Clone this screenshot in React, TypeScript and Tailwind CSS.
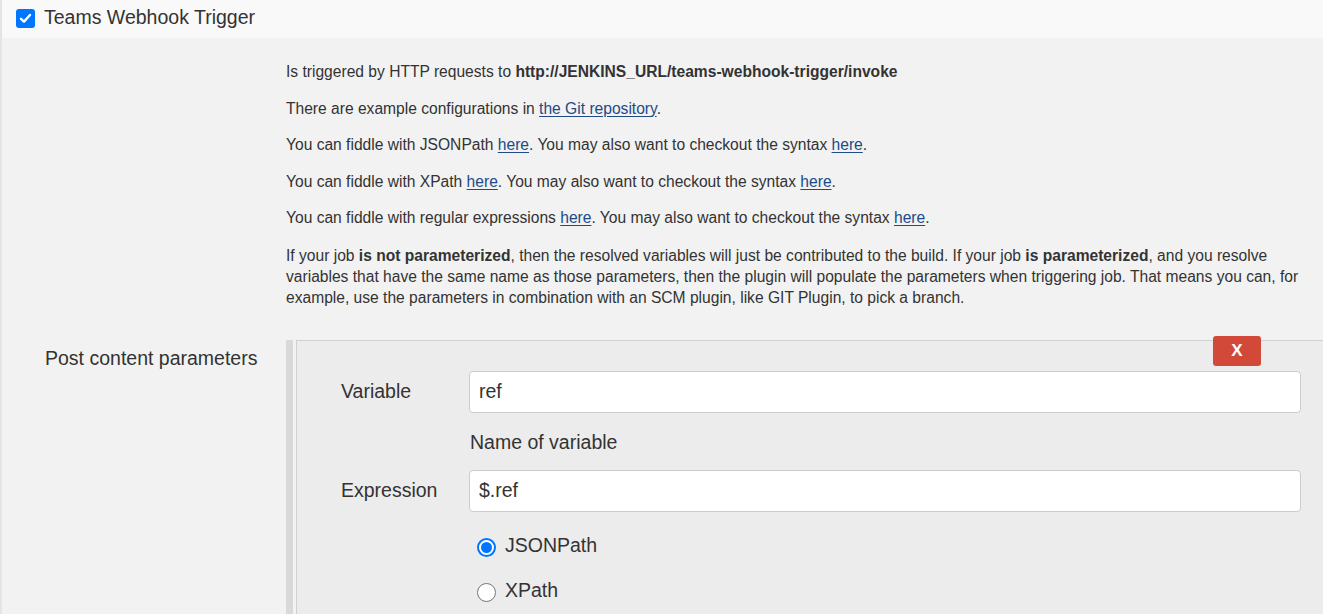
import React from 'react'

const font = { fontFamily: '"Liberation Sans", Arial, sans-serif' }

// ── Small bits ───────────────────────────────────────────────────────────────
function Link({ children }: { children: React.ReactNode }) {
  return <a className="text-[#204a87] underline decoration-1 underline-offset-2">{children}</a>
}

function Checkbox() {
  return (
    <span className="flex h-[19px] w-[19px] items-center justify-center rounded-[3px] bg-[#0075ff]">
      <svg width="13" height="13" viewBox="0 0 13 13" fill="none">
        <path d="M2 6.8 L5 9.6 L11 3" stroke="white" strokeWidth="2.4" strokeLinecap="round" strokeLinejoin="round" />
      </svg>
    </span>
  )
}

function Radio({ checked }: { checked?: boolean }) {
  return checked ? (
    <span className="flex h-[19px] w-[19px] items-center justify-center rounded-full border-2 border-[#0075ff] bg-white">
      <span className="h-[11px] w-[11px] rounded-full bg-[#0075ff]" />
    </span>
  ) : (
    <span className="h-[19px] w-[19px] rounded-full border border-[#767676] bg-white" />
  )
}

function TextBox({ value }: { value: string }) {
  return (
    <div className="flex h-[42px] items-center rounded-[4px] border border-[#cccccc] bg-white px-[9px] text-[19.5px] text-[#333]">
      {value}
    </div>
  )
}

// ── Page ─────────────────────────────────────────────────────────────────────
export default function App() {
  return (
    <div className="min-h-screen bg-white" style={font}>
      <div className="min-h-screen w-[1323px] border-l-2 border-[#e4e4e4] bg-[#f2f2f2] text-[#333]">
        {/* Header row */}
        <div className="flex h-[38px] items-center gap-[9px] bg-[#f9f9f9] pl-[14px] pb-[2px]">
          <Checkbox />
          <span className="text-[19.5px] text-[#333]">Teams Webhook Trigger</span>
        </div>

        {/* Help text */}
        <div className="w-[1310px] pl-[284px] pt-[23px] text-[15.6px] leading-[21px] text-[#333]">
          <p className="mb-[15.5px]">
            Is triggered by HTTP requests to <b>http://JENKINS_URL/teams-webhook-trigger/invoke</b>
          </p>
          <p className="mb-[15.5px]">
            There are example configurations in <Link>the Git repository</Link>.
          </p>
          <p className="mb-[15.5px]">
            You can fiddle with JSONPath <Link>here</Link>. You may also want to checkout the syntax <Link>here</Link>.
          </p>
          <p className="mb-[15.5px]">
            You can fiddle with XPath <Link>here</Link>. You may also want to checkout the syntax <Link>here</Link>.
          </p>
          <p className="mb-[16.5px]">
            You can fiddle with regular expressions <Link>here</Link>. You may also want to checkout the syntax <Link>here</Link>.
          </p>
          <p>
            If your job <b>is not parameterized</b>, then the resolved variables will just be contributed to the build. If
            your job <b>is parameterized</b>, and you resolve variables that have the same name as those parameters, then the
            plugin will populate the parameters when triggering job. That means you can, for example, use the parameters in
            combination with an SCM plugin, like GIT Plugin, to pick a branch.
          </p>
        </div>

        {/* Post content parameters */}
        <div className="mt-[32px] flex">
          <div className="w-[284px] shrink-0 pl-[43px] pt-[6px] text-[19.5px] leading-[24px]">Post content parameters</div>
          <div className="flex flex-1 border-l-[7px] border-[#d9d9d9] pl-[3px]">
            <div className="relative flex-1 border-l border-t border-[#d0d0d0] bg-[#ececec] pl-[44px] pr-[22px] pt-[30px] pb-[20px]">
              <button className="absolute -top-[5px] right-[62px] flex h-[30px] w-[48px] items-center justify-center rounded-[3px] bg-[#d24939] text-[17px] font-bold text-white">
                X
              </button>

              <div className="flex items-center">
                <div className="w-[128px] shrink-0 text-[19.5px]">Variable</div>
                <div className="flex-1">
                  <TextBox value="ref" />
                </div>
              </div>
              <div className="pl-[129px] pt-[17px] text-[19.5px] leading-[24px]">Name of variable</div>

              <div className="mt-[16px] flex items-center">
                <div className="w-[128px] shrink-0 text-[19.5px]">Expression</div>
                <div className="flex-1">
                  <TextBox value="$.ref" />
                </div>
              </div>

              <div className="flex flex-col gap-[20px] pl-[136px] pt-[23px] text-[19.5px]">
                <label className="flex items-center gap-[9px]">
                  <Radio checked />
                  <span className="-mt-[4px]">JSONPath</span>
                </label>
                <label className="flex items-center gap-[9px]">
                  <Radio />
                  <span className="-mt-[4px]">XPath</span>
                </label>
              </div>
            </div>
          </div>
        </div>
      </div>
    </div>
  )
}
